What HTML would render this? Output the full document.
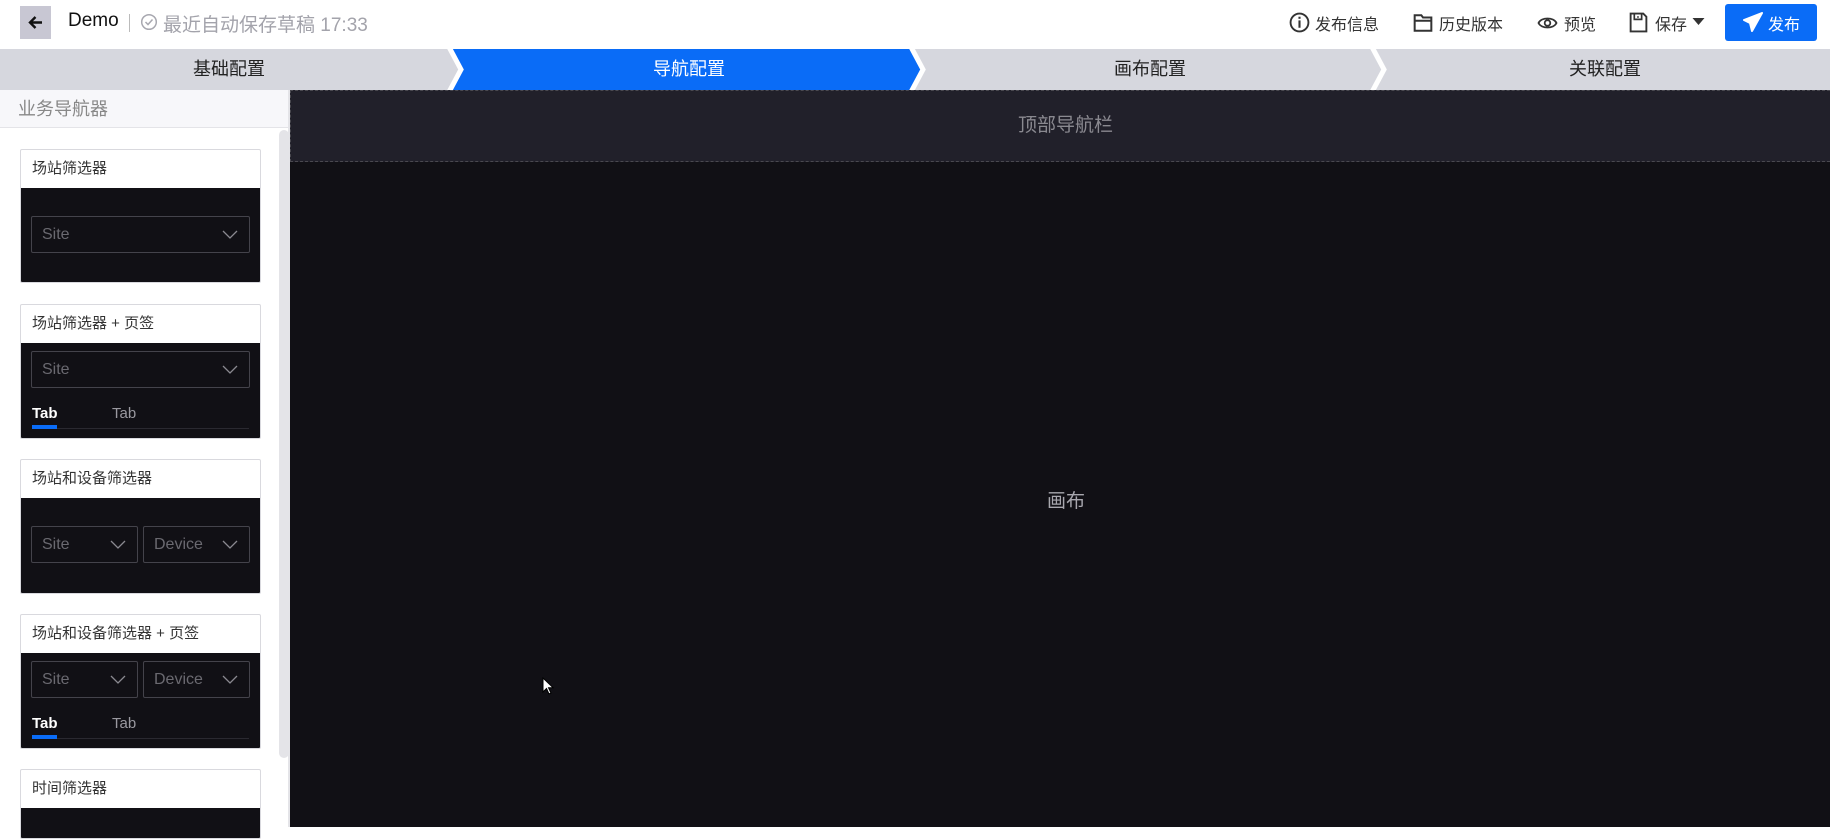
<!DOCTYPE html>
<html><head><meta charset="utf-8"><style>
*{box-sizing:border-box;margin:0;padding:0}
body{width:1830px;height:827px;overflow:hidden;background:#fff;font-family:"Liberation Sans","Noto Sans CJK SC",sans-serif;position:relative}
.abs{position:absolute}
.hdr{left:0;top:0;width:1830px;height:49px;background:#fff;box-shadow:0 1px 3px rgba(0,0,0,.06)}
.steps{left:0;top:49px;width:1830px;height:41px;background:#d6d7de}
.step{position:absolute;top:0;height:41px;line-height:41px;text-align:center;font-size:18px;color:#222}
.side{left:0;top:90px;width:290px;height:737px;background:#fff}
.card{position:absolute;left:20px;width:241px;border:1px solid #d9d9de;border-radius:2px;overflow:hidden;background:#fff}
.card .t{height:38px;line-height:38px;padding-left:11px;font-size:15px;color:#333}
.card .b{background:#111015;position:relative}
.sel{position:absolute;border:1px solid #44434b;border-radius:2px;height:37px;color:#6a6970;font-size:16px;line-height:35px;padding-left:10px}
.sel svg{position:absolute;right:11px;top:13px}
.tabs{position:absolute;left:11px;right:11px;height:1px;background:#2a2930}
.tab{position:absolute;font-size:15px;font-weight:bold;color:#fff}
.tab2{position:absolute;font-size:15px;color:#9a99a0}
.ul{position:absolute;width:25px;height:4px;background:#0a6cf7}
.hi{position:absolute;top:11px;font-size:16px;color:#333}
</style></head><body>
<div class="abs hdr">
 <div class="abs" style="left:20px;top:6px;width:31px;height:33px;background:#c8c7d3"></div>
 <svg class="abs" style="left:28px;top:15px" width="15" height="15" viewBox="0 0 15 15"><path d="M14 7.5H2M7.5 2L2 7.5 7.5 13" stroke="#111" stroke-width="2.4" fill="none"/></svg>
 <div class="abs" style="left:68px;top:10px;font-size:19px;color:#111">Demo</div>
 <div class="abs" style="left:129px;top:14px;width:1px;height:18px;background:#bbb"></div>
 <svg class="abs" style="left:140px;top:13px" width="18" height="18" viewBox="0 0 18 18"><circle cx="9" cy="9" r="7.3" stroke="#a8a8b0" stroke-width="1.5" fill="none"/><path d="M5.5 9l2.5 2.5 4.5-5" stroke="#a8a8b0" stroke-width="1.5" fill="none"/></svg>
 <div class="abs" style="left:163px;top:10px;font-size:19px;color:#a3a3ab">最近自动保存草稿 17:33</div>
 <svg class="abs" style="left:1289px;top:12px" width="21" height="21" viewBox="0 0 20 20"><circle cx="10" cy="10" r="8.5" stroke="#333" stroke-width="1.8" fill="none"/><rect x="9" y="8" width="2" height="7" fill="#333"/><rect x="9" y="4.5" width="2" height="2" fill="#333"/></svg>
 <div class="hi" style="left:1315px">发布信息</div>
 <svg class="abs" style="left:1413px;top:13px" width="20" height="20" viewBox="0 0 18 18"><path d="M1.5 2h6l1.5 2h7.5v12h-15zM1.5 7h15" stroke="#333" stroke-width="1.8" fill="none"/></svg>
 <div class="hi" style="left:1439px">历史版本</div>
 <svg class="abs" style="left:1537px;top:14px" width="21" height="18" viewBox="0 0 20 18"><path d="M1 9C4 3 16 3 19 9 16 15 4 15 1 9z" stroke="#333" stroke-width="1.8" fill="none"/><circle cx="10" cy="9" r="2.8" stroke="#333" stroke-width="1.8" fill="none"/></svg>
 <div class="hi" style="left:1564px">预览</div>
 <svg class="abs" style="left:1629px;top:12px" width="19" height="21" viewBox="0 0 18 20"><path d="M1.5 1.5h12l3 3v14h-15z" stroke="#333" stroke-width="1.8" fill="none"/><path d="M5 2v5h7V2M8.5 4v1.5" stroke="#333" stroke-width="1.6" fill="none"/></svg>
 <div class="hi" style="left:1655px">保存</div>
 <svg class="abs" style="left:1692px;top:18px" width="13" height="8" viewBox="0 0 12 8"><path d="M0 0h12L6 7z" fill="#333"/></svg>
 <div class="abs" style="left:1725px;top:4px;width:92px;height:37px;background:#0a6cf7;border-radius:3px"></div>
 <svg class="abs" style="left:1743px;top:12px" width="20" height="20" viewBox="0 0 20 20"><path d="M19 1L1 8l6 3 2 8zM7 11L19 1" stroke="#fff" stroke-width="2" fill="#fff" stroke-linejoin="round"/></svg>
 <div class="abs" style="left:1768px;top:11px;font-size:16px;color:#fff">发布</div>
</div>
<div class="abs steps">
 <svg class="abs" style="left:0;top:0" width="1830" height="41"><polygon points="450,0 911,0 922,20.5 911,41 450,41 461,20.5" fill="#0a6cf7"/><g stroke="#fff" stroke-width="5" fill="none"><polyline points="449,-2 461,20.5 449,43"/><polyline points="911,-2 923,20.5 911,43"/><polyline points="1372,-2 1384,20.5 1372,43"/></g></svg>
 <div class="step" style="left:0;width:458px">基础配置</div>
 <div class="step" style="left:458px;width:462px;color:#fff">导航配置</div>
 <div class="step" style="left:920px;width:460px">画布配置</div>
 <div class="step" style="left:1380px;width:450px">关联配置</div>
</div>
<div class="abs side">
 <div class="abs" style="left:0;top:0;width:290px;height:38px;background:#f7f7fa;border-bottom:1px solid #e4e4e8;font-size:18px;color:#888;line-height:38px;padding-left:18px">业务导航器</div>
 <div class="abs" style="left:279px;top:40px;width:10px;height:628px;background:#e4e4e8;border-radius:5px"></div>
 <div class="abs" style="left:288px;top:0;width:2px;height:737px;background:#e4e4e8"></div>
</div>
<div class="card" style="top:149px;height:134px"><div class="t">场站筛选器</div><div class="b" style="height:95px"><div class="sel" style="left:10px;top:28px;width:219px">Site<svg width="16" height="10"><path d="M1 1l7 7 7-7" stroke="#8a8990" stroke-width="1.3" fill="none"/></svg></div></div></div>
<div class="card" style="top:304px;height:135px"><div class="t">场站筛选器 + 页签</div><div class="b" style="height:96px"><div class="sel" style="left:10px;top:8px;width:219px">Site<svg width="16" height="10"><path d="M1 1l7 7 7-7" stroke="#8a8990" stroke-width="1.3" fill="none"/></svg></div><div class="tab" style="left:11px;top:62px">Tab</div><div class="tab2" style="left:91px;top:62px">Tab</div><div class="tabs" style="top:85px"></div><div class="ul" style="left:11px;top:82px"></div></div></div>
<div class="card" style="top:459px;height:135px"><div class="t">场站和设备筛选器</div><div class="b" style="height:96px"><div class="sel" style="left:10px;top:28px;width:107px">Site<svg width="16" height="10"><path d="M1 1l7 7 7-7" stroke="#8a8990" stroke-width="1.3" fill="none"/></svg></div><div class="sel" style="left:122px;top:28px;width:107px">Device<svg width="16" height="10"><path d="M1 1l7 7 7-7" stroke="#8a8990" stroke-width="1.3" fill="none"/></svg></div></div></div>
<div class="card" style="top:614px;height:135px"><div class="t">场站和设备筛选器 + 页签</div><div class="b" style="height:96px"><div class="sel" style="left:10px;top:8px;width:107px">Site<svg width="16" height="10"><path d="M1 1l7 7 7-7" stroke="#8a8990" stroke-width="1.3" fill="none"/></svg></div><div class="sel" style="left:122px;top:8px;width:107px">Device<svg width="16" height="10"><path d="M1 1l7 7 7-7" stroke="#8a8990" stroke-width="1.3" fill="none"/></svg></div><div class="tab" style="left:11px;top:62px">Tab</div><div class="tab2" style="left:91px;top:62px">Tab</div><div class="tabs" style="top:85px"></div><div class="ul" style="left:11px;top:82px"></div></div></div>
<div class="card" style="top:769px;height:70px"><div class="t">时间筛选器</div><div class="b" style="height:40px"></div></div>
<div class="abs" style="left:290px;top:90px;width:1540px;height:737px;background:#111015"></div>
<div class="abs" style="left:290px;top:90px;width:1540px;height:72px;background:#21202a;border:1px dashed #4a4950;border-right:none;text-align:center;line-height:70px;font-size:19px;color:#8a8990;padding-left:10px">顶部导航栏</div>
<div class="abs" style="left:296px;top:486px;width:1540px;text-align:center;font-size:19px;color:#a8a7ae">画布</div>
<svg class="abs" style="left:542px;top:677px" width="12" height="18" viewBox="0 0 12 18"><path d="M1 1v14l3.5-3.5 2.5 5.5 2-1-2.5-5.3H11z" fill="#fff" stroke="#000" stroke-width="1"/></svg>
</body></html>
